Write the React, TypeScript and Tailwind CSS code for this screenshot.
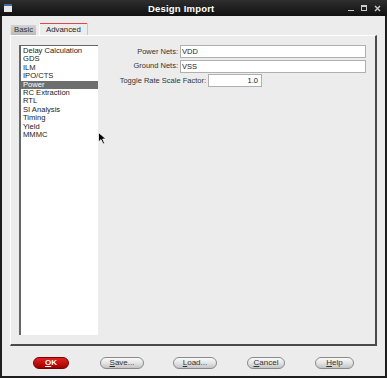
import React, { useState } from "react";

const items = [
  "Delay Calculation",
  "GDS",
  "ILM",
  "IPO/CTS",
  "Power",
  "RC Extraction",
  "RTL",
  "SI Analysis",
  "Timing",
  "Yield",
  "MMMC",
];

const font = { fontFamily: '"Liberation Sans", Arial, sans-serif' };

const PillButton = ({ label, mnemonic, w, primary }: { label: string; mnemonic: string; w: string; primary?: boolean }) => {
  const rest = label.slice(1);
  return (
    <button
      className={
        primary
          ? `${w} h-[12px] rounded-full border border-[#7a0000] bg-gradient-to-b from-[#e02020] to-[#a00000] text-white font-bold text-[8px] leading-none flex items-center justify-center`
          : `${w} h-[12px] rounded-full border border-[#8a8a8a] bg-gradient-to-b from-[#fafafa] via-[#e4e4e4] to-[#c4c4c4] text-[#333] text-[8px] leading-none flex items-center justify-center`
      }
    >
      <span className="underline">{mnemonic}</span>
      {rest}
    </button>
  );
};

export default function App() {
  const [selected, setSelected] = useState("Power");
  const [tab, setTab] = useState("Advanced");

  return (
    <div className="w-[387px] h-[378px] bg-[#1e1e1e] flex flex-col px-[2px] pb-[2px] relative" style={font}>
      {/* title bar */}
      <div className="h-[16px] flex items-center relative -mx-[2px] bg-gradient-to-b from-[#2e2e2e] to-[#111]">
        <div className="ml-[4px] w-[8px] h-[8px] bg-[#e8e8e8] border-t-[2px] border-[#3a6ea5]" />
        <div className="absolute left-[148px] top-[2px] text-white font-bold text-[9.5px] tracking-[0.2px]">Design Import</div>
        <div className="ml-auto mr-[6px] flex items-center gap-[7px] text-[#ccc]">
          <div className="w-[6px] h-[1px] bg-[#ccc] mt-[5px]" />
          <div className="w-[6px] h-[6px] border border-[#ccc] border-t-2" />
          <svg width="7" height="7" viewBox="0 0 7 7">
            <path d="M1 1L6 6M6 1L1 6" stroke="#ccc" strokeWidth="1.4" />
          </svg>
        </div>
      </div>

      <div className="flex-1 bg-[#ececec] flex flex-col">
        {/* tabs */}
        <div className="h-[19px] flex items-end pl-[8px] gap-[3px]">
          {["Basic", "Advanced"].map((t) =>
            t === tab ? (
              <div
                key={t}
                onClick={() => setTab(t)}
                className="h-[12px] flex flex-col bg-[#ececec] border-l border-l-white border-r border-r-[#c8c8c8] text-[7.8px] text-[#222]"
              >
                <div className="h-[1px] bg-[#e04848]" />
                <div className="px-[6px] leading-[11px]">{t}</div>
              </div>
            ) : (
              <div
                key={t}
                onClick={() => setTab(t)}
                className="h-[10px] px-[3px] bg-gradient-to-b from-[#d2d2d2] to-[#bcbcbc] border-l border-l-[#e8e8e8] text-[7.8px] text-[#333] leading-[10px]"
              >
                {t}
              </div>
            )
          )}
        </div>

        {/* panel */}
        <div className="ml-[8px] w-[367px] h-[311px] border-t border-l border-t-white border-l-white border-r-2 border-b-2 border-r-[#4a4a4a] border-b-[#4a4a4a] flex items-start pl-[8px] pt-[9px]">
          <div className="w-[79px] h-[290px] bg-white border-l-2 border-t border-l-[#666] border-t-[#666] pt-[1px]">
            {items.map((it) => (
              <div
                key={it}
                onClick={() => setSelected(it)}
                className={`h-[8.4px] pl-[2px] text-[7.6px] leading-[8.4px] whitespace-nowrap ${
                  it === selected ? "bg-[#6e6e6e] text-white" : "text-[#222]"
                }`}
              >
                {it}
              </div>
            ))}
          </div>

          <div className="flex flex-col gap-[1.5px] text-[7.5px] text-[#333]">
            <div className="flex items-center h-[13px]">
              <div className="w-[80px] text-right">Power Nets:</div>
              <div className="ml-[2px] w-[186px] h-[13px] bg-white border border-[#b0b0b0] pl-[1px] leading-[11px] text-[#222]">VDD</div>
            </div>
            <div className="flex items-center h-[13px]">
              <div className="w-[80px] text-right">Ground Nets:</div>
              <div className="ml-[2px] w-[186px] h-[13px] bg-white border border-[#b0b0b0] pl-[1px] leading-[11px] text-[#222]">VSS</div>
            </div>
            <div className="flex items-center h-[13px]">
              <div className="w-[108px] text-right">Toggle Rate Scale Factor:</div>
              <div className="ml-[2px] w-[54px] h-[13px] bg-white border border-[#b0b0b0] pr-[3px] text-right leading-[11px] text-[#222]">1.0</div>
            </div>
          </div>
        </div>

        {/* buttons */}
        <div className="flex items-start pt-[11px] pl-[31px]">
          <PillButton label="OK" mnemonic="O" w="w-[36px]" primary />
          <div className="ml-[31px]"><PillButton label="Save..." mnemonic="S" w="w-[44px]" /></div>
          <div className="ml-[29px]"><PillButton label="Load..." mnemonic="L" w="w-[44px]" /></div>
          <div className="ml-[30px]"><PillButton label="Cancel" mnemonic="C" w="w-[38px]" /></div>
          <div className="ml-[30px]"><PillButton label="Help" mnemonic="H" w="w-[39px]" /></div>
        </div>
      </div>

      {/* mouse pointer */}
      <svg className="absolute left-[98px] top-[132px]" width="9" height="13" viewBox="0 0 9 13">
        <path d="M0.5 0.5L0.5 10L3 7.6L5 12L6.6 11.3L4.7 7L8 7Z" fill="#000" stroke="#fff" strokeWidth="0.8" />
      </svg>
    </div>
  );
}
